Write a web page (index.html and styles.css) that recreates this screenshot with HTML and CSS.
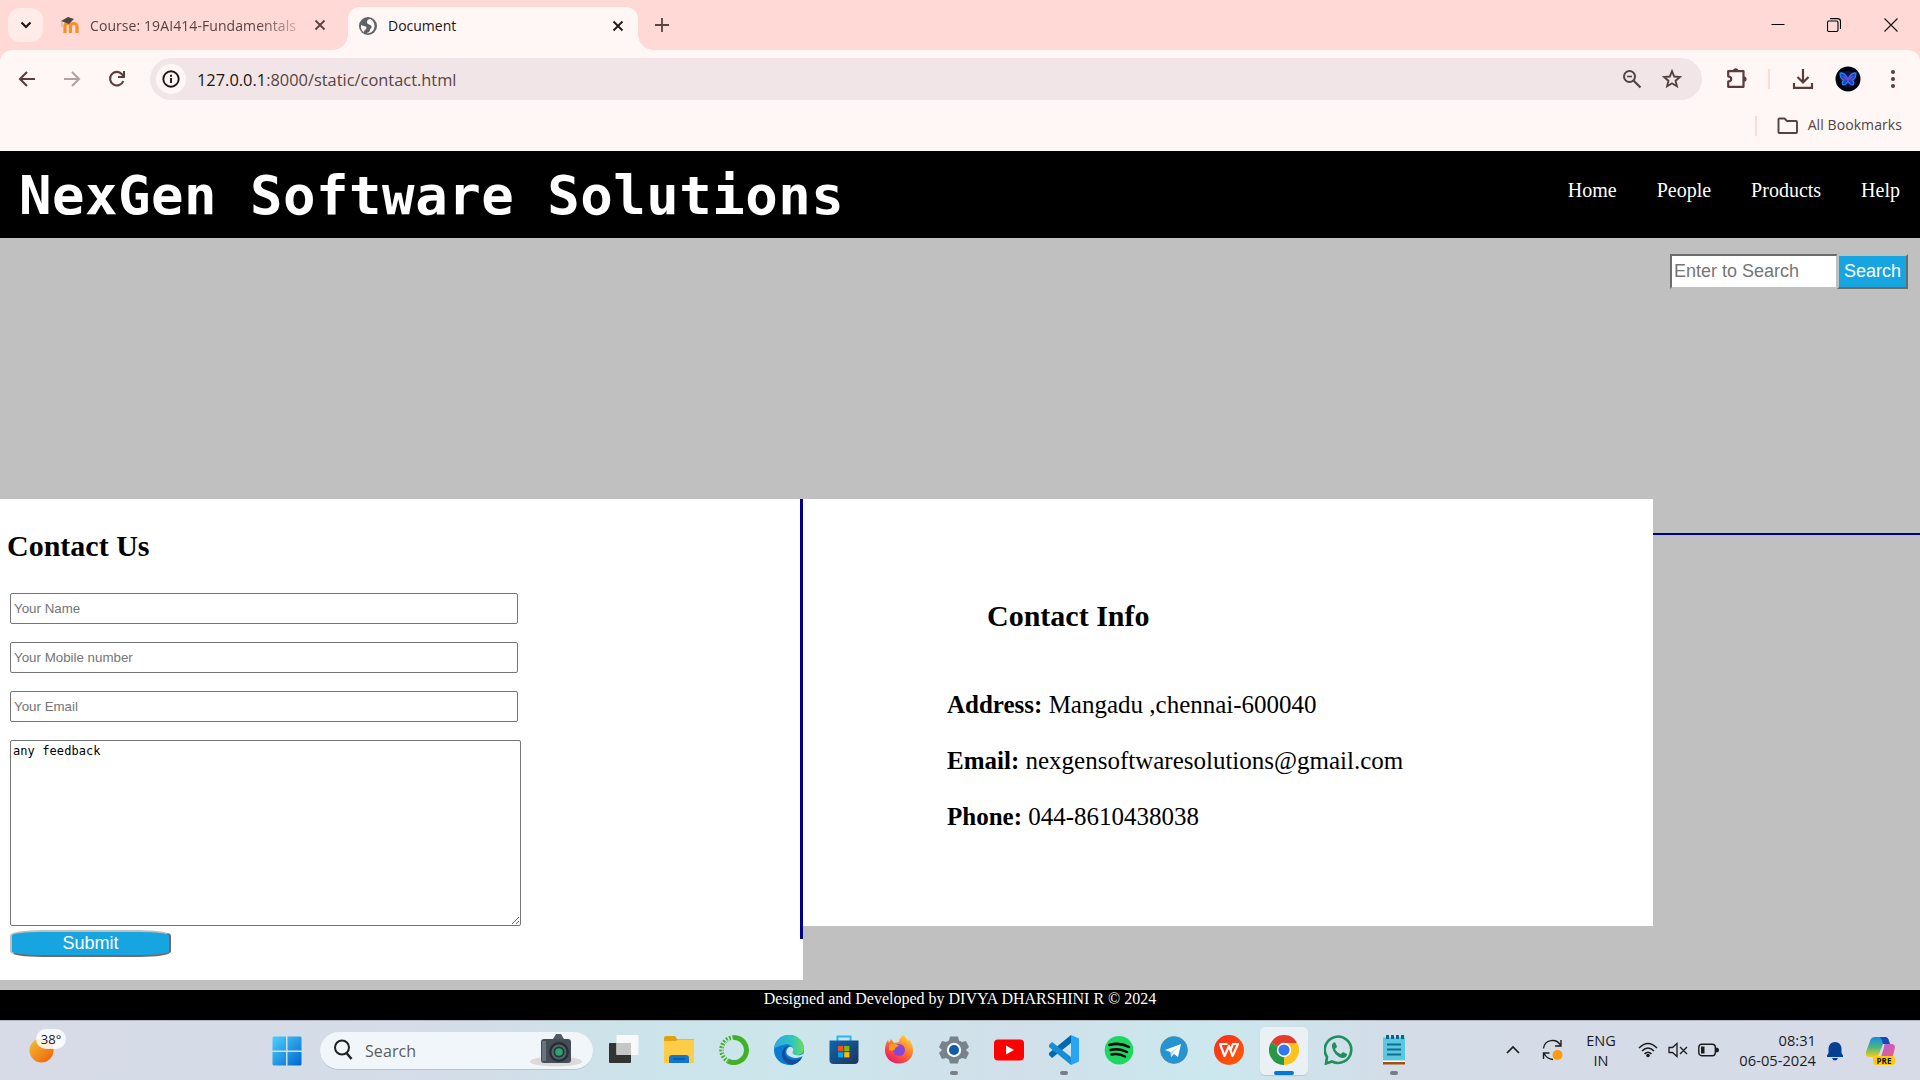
FILE: index.html
```html
<!DOCTYPE html>
<html lang="en">
<head>
<meta charset="utf-8">
<title>Document</title>
<link rel="stylesheet" href="styles.css">
</head>
<body>
<div class="tabstrip">
  <div class="tab-search"><svg width="12" height="12" viewBox="0 0 12 12"><path d="M1.5 3.5 6 8l4.500-4.500" fill="none" stroke="#201515" stroke-width="2.200"/></svg></div>
  <div class="tab">
    <svg class="fav" width="20" height="20" viewBox="0 0 20 20"><path d="M5 18V11q0-2.500 2.700-2.500T10.500 11v7m0-7q0-2.500 3-2.500t3.500 2.500v7" fill="none" stroke="#f98f26" stroke-width="3.200"/><path d="M1 6 8 2l6 2-5 5z" fill="#4a4644"/><path d="M2 6v6" stroke="#c9a58f"/></svg>
    <span class="tab-title faded">Course: 19AI414-Fundamentals</span>
    <svg class="x" width="12" height="12" viewBox="0 0 12 12"><path d="m1.500 1.500 9 9m0-9-9 9" stroke="#5a4341" stroke-width="1.800"/></svg>
  </div>
  <div class="tab active">
    <svg class="fav" width="20" height="20" viewBox="0 0 20 20"><circle cx="10" cy="10" r="9" fill="#5f6368"/><path d="M12.500 3C9 3 8.500 6 9.500 7.500s3.500 1 4 3-1.500 2-1.500 3.500-1.500 2.500-3.500 3c4.500 1 8-2.500 8-7 0-3-1.500-5.500-4-7zM3 9c1.500 1 3 .500 4.500 1.500S8.500 13 7 14s-1 1.500-1 2.500C3.500 15 2.500 12 3 9z" fill="#fff7f5"/></svg>
    <span class="tab-title">Document</span>
    <svg class="x" width="12" height="12" viewBox="0 0 12 12"><path d="m1.500 1.500 9 9m0-9-9 9" stroke="#201515" stroke-width="1.800"/></svg>
  </div>
  <svg class="plus" width="14" height="14" viewBox="0 0 14 14"><path d="M7 0v14M0 7h14" stroke="#5a4341" stroke-width="1.800"/></svg>
  <div class="win-buttons">
    <svg width="14" height="14" viewBox="0 0 14 14"><path d="M.5 6.500h13" stroke="#000"/></svg>
    <svg width="14" height="14" viewBox="0 0 14 14"><rect x=".5" y="3" width="10.500" height="10.500" rx="1.500" fill="none" stroke="#000" stroke-width="1.100"/><path d="M3 .6h7.500q3 0 3 3V11" fill="none" stroke="#000" stroke-width="1.100"/></svg>
    <svg width="14" height="14" viewBox="0 0 14 14"><path d="m.5.500 13 13m0-13-13 13" stroke="#201515" stroke-width="1.200"/></svg>
  </div>
</div>
<div class="chrome-bars">
  <div class="toolbar">
    <svg class="nav-ico" width="18" height="18" viewBox="0 0 18 18"><path d="M17 9H2m7-7L2 9l7 7" fill="none" stroke="#5a3c3a" stroke-width="2.100"/></svg>
    <svg class="nav-ico" width="18" height="18" viewBox="0 0 18 18"><path d="M1 9h15M9 2l7 7-7 7" fill="none" stroke="#b1a3a2" stroke-width="2.100"/></svg>
    <svg class="nav-ico" width="18" height="18" viewBox="0 0 18 18"><path d="M15.300 11A6.800 6.800 0 1 1 14 4.200L16 6.300" fill="none" stroke="#5a3c3a" stroke-width="2.100"/><path d="M17 1v7h-7V6h5V1z" fill="#5a3c3a"/></svg>
    <div class="omnibox">
      <div class="site-info"><svg width="18" height="18" viewBox="0 0 18 18"><circle cx="9" cy="9" r="7.700" fill="none" stroke="#201515" stroke-width="1.900"/><path d="M9 8v5M9 4.700v2" stroke="#201515" stroke-width="1.900"/></svg></div>
      <span class="url"><span class="host">127.0.0.1</span>:8000/static/contact.html</span>
      <svg class="zoom-ico" width="20" height="20" viewBox="0 0 20 20"><circle cx="7.500" cy="7.500" r="5.500" fill="none" stroke="#544341" stroke-width="2"/><path d="m11.500 11.500 7 7" stroke="#544341" stroke-width="2.200"/><path d="M5 7.500h5" stroke="#544341" stroke-width="1.600"/></svg>
      <svg class="star-ico" width="20" height="20" viewBox="0 0 20 20"><path d="m10 2.200 2.200 5.300 5.700.5-4.300 3.700 1.300 5.600-4.900-3-4.900 3 1.300-5.600L2.100 8l5.700-.5z" fill="none" stroke="#544341" stroke-width="1.900"/></svg>
    </div>
    <svg class="puzzle" width="22" height="22" viewBox="0 0 22 22"><path d="M2.200 4.200h15.300v15.600H2.200v-5.300c4-.5 4-4.700 0-5.200z" fill="none" stroke="#5a3c3a" stroke-width="2.200" stroke-linejoin="round"/><path d="M7 4a2.700 2.700 0 0 1 5.400 0zM18 9.500a2.600 2.600 0 0 1 0 5.200z" fill="#5a3c3a"/></svg>
    <i class="divider"></i>
    <svg class="download" width="22" height="22" viewBox="0 0 22 22"><path d="M11 1v13M5.500 9l5.500 5.500L16.500 9M2 15v4.800h18V15" fill="none" stroke="#5a3c3a" stroke-width="2.200"/></svg>
    <svg class="avatar" width="26" height="26" viewBox="0 0 26 26"><circle cx="13" cy="13" r="12.500" fill="#02020f"/><circle cx="13" cy="13" r="8" fill="#10104a"/><path d="M12.500 12Q9 6 5 7q0 6 4 7-3 2-1 5 3 0 5-4 2 4 5 4 2-3-1-5 4-1 4-7-4-1-7.500 5z" fill="#263fc0" stroke="#168cf5" stroke-width="1.200"/><path d="m8 10 5 4 5-4" stroke="#9934ca" stroke-width="1.500" fill="none"/></svg>
    <svg class="dots" width="6" height="20" viewBox="0 0 6 20"><g fill="#5a3c3a"><circle cx="3" cy="3" r="2"/><circle cx="3" cy="10" r="2"/><circle cx="3" cy="17" r="2"/></g></svg>
  </div>
  <div class="bookmarks">
    <i class="divider"></i>
    <svg width="22" height="18" viewBox="0 0 22 18"><path d="M1.500 2.500q0-1 1-1h5l2.500 2.500h9q1 0 1 1v10q0 1-1 1H2.500q-1 0-1-1z" fill="none" stroke="#544341" stroke-width="1.900"/></svg>
    <span>All Bookmarks</span>
  </div>
</div>
<div class="page">
  <header class="site-header">
    <h1>NexGen Software Solutions</h1>
    <nav><a>Home</a><a>People</a><a>Products</a><a>Help</a></nav>
  </header>
  <main>
    <div class="search"><input type="text" placeholder="Enter to Search"><button>Search</button></div>
    <div class="columns">
      <section class="contact">
        <form>
          <h2>Contact Us</h2>
          <input type="text" placeholder="Your Name">
          <input type="text" placeholder="Your Mobile number">
          <input type="text" placeholder="Your Email">
          <textarea>any feedback</textarea>
          <button type="button">Submit</button>
        </form>
        <div class="rule"></div>
      </section>
      <section class="info">
        <h2>Contact Info</h2>
        <p><b>Address:</b> Mangadu ,chennai-600040</p>
        <p><b>Email:</b> nexgensoftwaresolutions@gmail.com</p>
        <p><b>Phone:</b> 044-8610438038</p>
      </section>
      <div class="side-line"></div>
    </div>
  </main>
  <footer>Designed and Developed by DIVYA DHARSHINI R © 2024</footer>
</div>
<div class="taskbar">
  <div class="weather">
    <svg width="25" height="25" viewBox="0 0 25 25"><defs><linearGradient id="sun" x1="0" y1="0" x2="1" y2="1"><stop offset=".1" stop-color="#f0b932"/><stop offset=".8" stop-color="#f2700f"/></linearGradient></defs><circle cx="12.500" cy="12.500" r="12" fill="url(#sun)"/></svg>
    <span class="temp">38°</span>
  </div>
  <svg class="start" width="30" height="30" viewBox="0 0 30 30"><defs><linearGradient id="win" x1="0" y1="0" x2="1" y2="1"><stop stop-color="#4cd0ff"/><stop offset="1" stop-color="#0067cc"/></linearGradient></defs><path d="M1.500.500H14v14H.500v-13zM15.500.500h13l1 1v13h-14zM.500 16H14v13.500H1.500l-1-1zM15.500 16h14v12.500l-1 1h-13z" fill="url(#win)"/></svg>
  <div class="task-search">
    <svg width="20" height="24" viewBox="0 0 20 24"><circle cx="9" cy="9.500" r="7" fill="none" stroke="#222" stroke-width="2"/><path d="m13.500 15 5 6" stroke="#222" stroke-width="2.500"/></svg>
    <span>Search</span>
    <svg class="camera" width="52" height="34" viewBox="0 0 52 34"><ellipse cx="26" cy="28.500" rx="26" ry="5" fill="#dcd9da"/><path d="M23 6 26 1h5l3 5z" fill="#515b65"/><rect x="11" y="6" width="30" height="24" rx="3" fill="#454e57"/><path d="M12 8h4v20h-4z" fill="#69737c"/><circle cx="29" cy="19" r="10" fill="#272e36"/><circle cx="29" cy="19" r="7.500" fill="#59646b"/><circle cx="29" cy="19" r="5.500" fill="#173f39"/><circle cx="29" cy="19" r="3.800" fill="#32a071"/></svg>
  </div>
  <div class="apps">
    <div class="app"><svg viewBox="0 0 30 30"><rect y="8" width="22" height="20" rx="1" fill="#333"/><rect x="7.500" y="0" width="22" height="20" rx="1" fill="#f8f8f8"/><path d="M7.500 8H22v12H7.500z" fill="#c6c6c6"/></svg></div>
    <div class="app"><svg viewBox="0 0 30 30"><path d="M0 3q0-2 2-2h9l2 3h17v6H0z" fill="#e2a111"/><path d="M0 6h12l2-1.500h16V28H0z" fill="#ffcc48"/><path d="M5 28v-5q0-3 3-3h14q3 0 3 3v5z" fill="#1378cd"/><path d="M9 24h12" stroke="#0b4a8c" stroke-width="1.200"/></svg></div>
    <div class="app"><svg viewBox="0 0 30 30"><path d="M15 2.500A12.500 12.500 0 1 1 9 26" fill="none" stroke="#43b02a" stroke-width="5"/><path d="M15 2.500A12.500 12.500 0 0 0 9 26" fill="none" stroke="#43b02a" stroke-width="4.500" stroke-dasharray="1.700 1.500"/><path d="M14 4A11 11 0 0 0 7 23" fill="none" stroke="#cfe4e8" stroke-width="1" stroke-dasharray="2 2"/></svg></div>
    <div class="app"><svg viewBox="0 0 30 30"><defs><linearGradient id="edge"><stop stop-color="#2aa9e5"/><stop offset=".6" stop-color="#2fc6bd"/><stop offset="1" stop-color="#69df51"/></linearGradient></defs><circle cx="15" cy="15" r="15" fill="#0b7cd4"/><path d="M0 14C1 5 7 0 15 0c9 0 15 6 15 13 0 5-3 7-7 7s-6-2-4-4c1-5-5-8-10-6-5 1-8 3-9 4z" fill="url(#edge)"/><path d="M9 15c-3 6 1 14 9 15 5-1 8-4 10-7-9 4-17 1-17-6 0-3 2-5 4-6-3 0-5 2-6 4z" fill="#114f9d"/><path d="M15 12c-3 2-4 7 0 9 5 3 10 2 14 0l1-3c-2 2-5 2.500-7 2.200-4-.2-5-2-4-4.200 1-2-1-5-4-4z" fill="#cfe5ea"/></svg></div>
    <div class="app"><svg viewBox="0 0 30 30"><defs><linearGradient id="store" x1="0" y1="0" x2="1" y2="1"><stop stop-color="#0c67b4"/><stop offset="1" stop-color="#213358"/></linearGradient></defs><path d="M8.500 7V1.500h13V7" fill="none" stroke="#27b7ee" stroke-width="2"/><path d="M.5 5.500h29V25q0 4-4 4h-21q-4 0-4-4z" fill="url(#store)"/><path d="M9 11h5.200v5.200H9z" fill="#f25022"/><path d="M15.200 11h5.200v5.200h-5.200z" fill="#7fba00"/><path d="M9 17.200h5.200v5.200H9z" fill="#00a4ef"/><path d="M15.200 17.200h5.200v5.200h-5.200z" fill="#ffb900"/></svg></div>
    <div class="app"><svg viewBox="0 0 30 30"><defs><linearGradient id="ff" x1="1" y1="0" x2=".3" y2="1"><stop stop-color="#fff045"/><stop offset=".5" stop-color="#ff7a2c"/><stop offset="1" stop-color="#ee1767"/></linearGradient></defs><path d="M19 0c2 1 4 4 5 6l1-2c3 4 4 8 4 12 0 7-6 12.500-14 12.500S1 23 1 15c0-4 1-7 3-10l1 3 2-4 3 4 5-1c0-3 2-5 4-7z" fill="url(#ff)"/><circle cx="15" cy="15" r="6" fill="#8447d8"/><path d="M5 9c5-1 8 0 10 2-2 1-4 1-4 3-1 2-4 2-6 1z" fill="#ff9a20"/></svg></div>
    <div class="app run"><svg viewBox="0 0 30 30"><path d="M11 1.500h8l1 4 3 1.500 4-1 3 6-3 3 3 3-3 6-4-1-3 1.500-1 4h-8l-1-4L7 23l-4 1-3-6 3-3-3-3 3-6 4 1 3-1.500z" fill="#78828c"/><circle cx="15" cy="15" r="7.200" fill="#f5f5f5"/><circle cx="15" cy="15" r="5" fill="#0d5cab"/></svg></div>
    <div class="app"><svg viewBox="0 0 30 30"><rect y="4.500" width="30" height="21" rx="4" fill="#f00"/><path d="m12 10.500 8 4.500-8 4.500z" fill="#fff"/></svg></div>
    <div class="app run"><svg viewBox="0 0 30 30"><path d="m22 8-19 15-3-3V18L22 0z" fill="#0068af"/><path d="m22 22-19-15-3 3v2l22 18z" fill="#168dd6"/><path d="m22 0 8 3.500v23L22 30z" fill="#28a5f4"/></svg></div>
    <div class="app"><svg viewBox="0 0 30 30"><circle cx="15" cy="15.200" r="14.300" fill="#1ed760"/><path d="M5.500 10q10-3 19.500 2M6.500 15q9-2 16.500 2M7.500 19.500q7-1.500 13.500 2" fill="none" stroke="#000" stroke-width="2.500" stroke-linecap="round"/></svg></div>
    <div class="app"><svg viewBox="0 0 30 30"><circle cx="15" cy="15" r="13.500" fill="#2595d1" stroke="#527d98" stroke-width=".6"/><path d="m6 15 16-6-3 13-4-3-3 3-.500-5z" fill="#fff"/><path d="m12 17 7-5-5 6-2 4z" fill="#bfdbeb"/></svg></div>
    <div class="app"><svg viewBox="0 0 30 30"><defs><linearGradient id="wps" x1="0" y1="0" x2="1" y2="1"><stop stop-color="#fa271c"/><stop offset="1" stop-color="#ff6106"/></linearGradient></defs><circle cx="15" cy="15" r="15" fill="url(#wps)"/><path d="M13.500 9H6l4.500 12 4.500-10 3.500 10 5.500-12h-5l-2.500 6" fill="none" stroke="#fff" stroke-width="2.200" stroke-linejoin="round"/></svg></div>
    <div class="app current"><svg viewBox="0 0 30 30"><path d="M15 15 2 7.500a15 15 0 0 1 26 0z" fill="#e33b2e"/><path d="M15 15 28 7.500A15 15 0 0 1 15 30z" fill="#fcc31e"/><path d="M15 15v15A15 15 0 0 1 2 7.500z" fill="#279847"/><path d="M15 8h13.300Q31 16 26 25.200L15 30l6-11z" fill="#fcc31e"/><circle cx="15" cy="15" r="7.200" fill="#fff"/><circle cx="15" cy="15" r="5.600" fill="#3277ec"/></svg></div>
    <div class="app"><svg viewBox="0 0 30 30"><path d="M3 22a13.200 13.200 0 1 1 5 4.500l-6 2z" fill="none" stroke="#1f8f5d" stroke-width="2.600"/><path d="M9 8q2-2 3 1l1 3-2 2q2 4 6 5l2-2 4 2q0 4-5 4Q10 21 8 12q-.500-2 1-4z" fill="#1f8f5d"/></svg></div>
    <div class="app run"><svg viewBox="0 0 30 30"><path d="M4 2.500h22V26H4z" fill="#5bc8df"/><path d="M4 27h22v2.500H4z" fill="#a84d0b"/><path d="M4 25.500h22v1.500H4z" fill="#fff"/><path d="M7 2h3m2 0h3m2 0h3m2 0h3" stroke="#09668b" stroke-width="4"/><path d="M8 9.500h14M8 14.500h14M8 19.500h14" stroke="#126c92" stroke-width="1.800"/></svg></div>
  </div>
  <div class="tray">
    <svg class="up" width="14" height="10" viewBox="0 0 14 10"><path d="m1 8 6-6 6 6" fill="none" stroke="#1c1c1c" stroke-width="1.700"/></svg>
    <svg class="sync" width="22" height="22" viewBox="0 0 22 22"><path d="M1.500 9.500a9 9 0 0 1 17-3M19 1v6h-6M1.500 20v-6h6M2 14.500Q5 20 11 20.500" fill="none" stroke="#1c1c1c" stroke-width="1.400"/><circle cx="15.500" cy="16" r="5" fill="#ff9a0b"/></svg>
    <div class="lang">ENG<br>IN</div>
    <svg class="wifi" width="20" height="16" viewBox="0 0 20 16"><path d="M1 6q9-9 18 0M4 9q6-6 12 0M6.500 12q3.500-3.500 7 0" fill="none" stroke="#1c1c1c" stroke-width="1.500"/><circle cx="10" cy="13.500" r="1.800" fill="#1c1c1c"/></svg>
    <svg class="sound" width="20" height="16" viewBox="0 0 20 16"><path d="M1 5.500h3.500L9 1.500v13l-4.500-4H1zM12 5l7 7m0-7-7 7" fill="none" stroke="#1c1c1c" stroke-width="1.300"/></svg>
    <svg class="battery" width="21" height="14" viewBox="0 0 21 14"><rect x=".8" y="1.200" width="16.500" height="11.500" rx="3" fill="none" stroke="#1c1c1c" stroke-width="1.400"/><path d="M3 3.500h3.500v7H3zM18 4.500q3 0 3 2.500t-3 2.500z" fill="#1c1c1c"/></svg>
    <div class="clock">08:31<br>06-05-2024</div>
    <svg class="bell" width="18" height="20" viewBox="0 0 18 20"><path d="M1 16v-1.500L2.500 12V7q1-6 6.500-6t6.500 6v5l1.500 2.500V16zM6 17h6q-1 2.500-3 2.500T6 17z" fill="#043f91"/></svg>
    <div class="copilot">
      <svg width="30" height="28" viewBox="0 0 30 28"><defs><linearGradient id="cp1" x1="0" y1="0" x2="0" y2="1"><stop stop-color="#168ce0"/><stop offset=".5" stop-color="#48b483"/><stop offset="1" stop-color="#f5cf19"/></linearGradient><linearGradient id="cp2" x1="0" y1="0" x2="1" y2="1"><stop stop-color="#af62e8"/><stop offset="1" stop-color="#f55a78"/></linearGradient></defs><path d="M9 0h10q3 0 4 4l1 3h-7l-4 10q-1 3-4 3H3q-4 0-3-5L4 4q1-4 5-4z" fill="url(#cp1)"/><path d="M14 0h5q3 0 4 4l1 3h-7q-1-5-3-7z" fill="#1749bd"/><path d="M19 7h7q3 0 3 4l-3 11H12q3-1 4-5l2-7q0-3 1-3z" fill="url(#cp2)"/></svg>
      <b class="pre">PRE</b>
    </div>
  </div>
</div>
</body>
</html>
```
FILE: styles.css
```css
* { box-sizing: border-box; }
body { margin: 0; width: 1920px; height: 1080px; overflow: hidden; display: flex; flex-direction: column; background: #ffd9d6; font-family: "Open Sans", sans-serif; }
svg { display: block; flex: none; }

/* Tab strip */
.tabstrip { height: 50px; flex: none; display: flex; align-items: flex-start; padding-left: 8px; background: #ffd9d6; }
.tab-search { width: 35px; height: 34px; margin-top: 8px; border-radius: 12px; background: #ffece9; display: flex; align-items: center; justify-content: center; }
.tab { width: 305px; height: 50px; padding: 0 22px 0 17px; display: flex; align-items: center; }
.tab .fav { margin-right: 10px; }
.tab-title { flex: 1; padding-top: 1px; font-size: 14px; line-height: 20px; color: #5a4341; white-space: nowrap; overflow: hidden; }
.faded { letter-spacing: 0.080px; margin-right: 18px; -webkit-mask-image: linear-gradient(90deg, #000 82%, rgba(0,0,0,.3)); mask-image: linear-gradient(90deg, #000 82%, rgba(0,0,0,.3)); }
.active { position: relative; width: 290px; height: 43px; margin-top: 7px; padding: 0 14px 6px 10px; border-radius: 12px 12px 0 0; background: #fff7f5; }
.active .tab-title { color: #201515; }
.active::before, .active::after { content: ""; position: absolute; bottom: 0; width: 15px; height: 15px; }
.active::before { left: -15px; background: radial-gradient(circle at 0 0, transparent 14.500px, #fff7f5 15px); }
.active::after { right: -15px; background: radial-gradient(circle at 100% 0, transparent 14.500px, #fff7f5 15px); }
.plus { margin: 18px 0 0 17px; }
.win-buttons { margin: 18px 22px 0 auto; display: flex; gap: 43px; }
.win-buttons svg:first-child { margin-right: -1px; }

/* Toolbar and bookmarks */
.chrome-bars { height: 101px; flex: none; background: #fff7f5; border-radius: 12px 12px 0 0; }
.toolbar { height: 58px; display: flex; align-items: center; padding-left: 18px; }
.nav-ico { margin-right: 27px; }
.omnibox { width: 1552px; height: 42px; margin-left: -3px; border-radius: 21px; background: #f1e5e7; display: flex; align-items: center; padding: 0 20px 0 6px; }
.site-info { width: 30px; height: 30px; border-radius: 50%; background: #fff7f5; display: flex; align-items: center; justify-content: center; }
.url { flex: 1; margin-left: 11px; padding-top: 1px; font-size: 16.400px; line-height: 24px; color: #5a4341; }
.host { color: #201515; }
.zoom-ico { margin-right: 20px; }
.puzzle { margin: -3px 0 0 24px; }
.divider { width: 2px; height: 20px; background: #ffd9d6; }
.toolbar .divider { margin-left: 20px; }
.download { margin: -1px 0 0 22px; }
.avatar { margin-left: 21px; }
.dots { margin-left: 29px; }
.bookmarks { height: 35px; display: flex; align-items: center; justify-content: flex-end; padding-right: 18px; color: #544341; font-size: 14px; line-height: 18px; }
.bookmarks span { padding-bottom: 1px; letter-spacing: .08px; }
.bookmarks svg { margin: 0 9px 0 20px; }

/* Web page */
.page { height: 869px; flex: none; display: flex; flex-direction: column; background: silver; font-family: "Liberation Serif", serif; }
.site-header { height: 87px; flex: none; background: #000; color: #fff; display: flex; justify-content: space-between; padding: 0 20px 0 19px; }
h1 { margin: 14px 0 0; font: bold 54px/62px "DejaVu Sans Mono", monospace; letter-spacing: .5px; white-space: nowrap; }
nav { display: flex; gap: 40px; margin-top: 27px; font-size: 20px; line-height: 24px; }
main { height: 752px; flex: none; display: flex; flex-direction: column; justify-content: space-between; }
.search { display: flex; justify-content: flex-end; padding: 16px 12px 0 0; }
.search input { width: 168px; height: 35px; padding: 1px 2px; border: 2px solid; border-color: #6b6b6b #c0c0c0 #c0c0c0 #6b6b6b; border-radius: 0; font: 18px "Liberation Sans", sans-serif; }
button { font: 18px "Liberation Sans", sans-serif; color: #fff; background: #17a5e1; border: 2px solid; border-color: #c0c0c0 #6b6b6b #6b6b6b #c0c0c0; padding: 0; }
.search button { width: 71px; margin-left: -1px; height: 35px; }
::placeholder { color: #757575; opacity: 1; }
.columns { height: 491px; display: grid; grid-template-columns: 803px 850px 1fr; align-items: start; }
.contact { height: 481px; background: #fff; display: flex; justify-content: space-between; }
.contact form { display: flex; flex-direction: column; padding-left: 10px; }
.contact h2 { margin: 30px 0 30px -3px; font-size: 30px; line-height: 34px; }
.contact input { width: 508px; height: 31px; margin-bottom: 18px; padding: 1px 3px; border: 1px solid #767676; border-radius: 2px; font: 13.333px "Liberation Sans", sans-serif; }
.contact textarea { display: block; width: 511px; height: 186px; padding: 3px 2px; border: 1px solid #767676; border-radius: 2px; font: 12px/15px "DejaVu Sans Mono", monospace; letter-spacing: .08px; color: #000; }
.contact button { width: 161px; height: 27px; margin-top: 4px; padding-bottom: 2px; border-radius: 20%; line-height: 20px; }
.rule { width: 3px; height: 440px; background: #00008b; }
.info { height: 427px; padding: 100px 0 0 144px; background: #fff; font-size: 25px; line-height: 28px; }
.info h2 { margin: 0 0 58px 40px; font-size: 30px; line-height: 34px; }
.info p { margin: 0 0 28px; }
.side-line { height: 2px; margin-top: 34px; background: #00008b; }
footer { height: 30px; background: #000; color: #fff; text-align: center; font-size: 16px; line-height: 18px; }

/* Taskbar */
.taskbar { height: 60px; flex: none; display: flex; align-items: center; border-top: 1px solid #b5bac2; background: linear-gradient(90deg, #d7dbe7 0, #d3dde8 25%, #cce3ea 33%, #cbe6ec 41%, #d1dfe9 53%, #cbe8ee 63%, #d3dce7 73%, #d7dbe8); color: #1c1c1c; }
.weather { position: relative; width: 40px; height: 43px; margin-left: 29px; padding-top: 9px; }
.temp { position: absolute; left: 7px; top: 0; width: 30px; height: 20px; border-radius: 10px; background: rgba(255,255,255,.85); text-align: center; font-size: 13px; line-height: 20px; }
.start { margin-left: 203px; }
.task-search { width: 273px; height: 38px; margin-left: 18px; padding: 0 11px 0 13px; border-radius: 19px; background: #f1f6fa; border-bottom: 1px solid #b6c3cb; display: flex; align-items: center; color: #5d5d5d; font-size: 16px; }
.task-search svg:first-child { margin-right: 12px; }
.task-search span { padding-top: 1px; letter-spacing: .1px; }
.camera { margin-left: auto; }
.apps { display: flex; margin-left: 7px; gap: 7px; }
.app { position: relative; width: 48px; height: 48px; display: flex; align-items: center; justify-content: center; border-radius: 5px; }
.app svg { width: 30px; height: 30px; margin-top: -1px; }
.current { background: #e9f1f7; box-shadow: 0 1px 1px #bac7d0; }
.run::after, .current::after { content: ""; position: absolute; bottom: 0; width: 8px; height: 4px; border-radius: 2px; background: #777f86; }
.current::after { width: 20px; background: #0078d4; }
.tray { display: flex; align-items: center; margin-left: 88px; font-size: 15px; line-height: 20px; }
.up { margin-top: -1px; }
.sync { margin-left: 22px; margin-top: -1px; }
.lang { width: 32px; margin-left: 21px; text-align: center; font-size: 14.500px; }
.wifi { margin-left: 21px; margin-top: -1px; }
.sound { margin-left: 10px; margin-top: -1px; }
.battery { margin-left: 10px; margin-top: -1px; }
.clock { width: 90px; margin-left: 7px; margin-top: -2px; text-align: right; white-space: nowrap; font-size: 14.700px; }
.bell { margin-left: 10px; }
.copilot { position: relative; margin-left: 22px; }
.pre { position: absolute; left: 7px; top: 19px; width: 22px; height: 9px; border-radius: 3px; background: #ffc911; font-size: 8px; line-height: 9px; text-align: center; color: #111; }
```
